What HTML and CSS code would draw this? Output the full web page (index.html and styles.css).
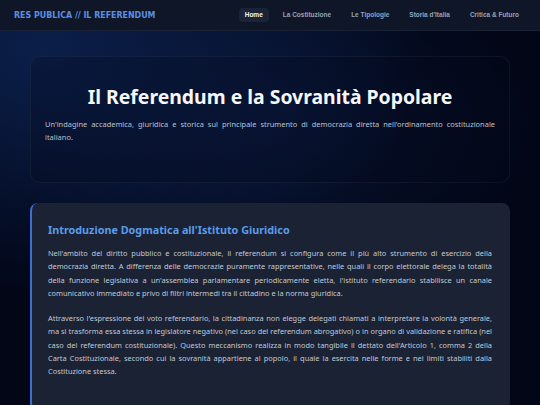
FILE: index.html
```html
<!DOCTYPE html>
<html lang="it">
<head>
<meta charset="utf-8">
<title>Res Publica // Il Referendum</title>
<link rel="stylesheet" href="styles.css">
</head>
<body>
<header class="topbar">
  <div class="brand">RES PUBLICA // IL REFERENDUM</div>
  <nav class="nav">
    <a class="nav-item active">Home</a>
    <a class="nav-item">La Costituzione</a>
    <a class="nav-item">Le Tipologie</a>
    <a class="nav-item">Storia d'Italia</a>
    <a class="nav-item">Critica &amp; Futuro</a>
  </nav>
</header>
<main class="main">
  <section class="hero">
    <h1 class="hero-title">Il Referendum e la Sovranità Popolare</h1>
    <p class="hero-sub">Un'indagine accademica, giuridica e storica sul principale strumento di democrazia diretta nell'ordinamento costituzionale italiano.</p>
  </section>
  <section class="card">
    <h2 class="card-title">Introduzione Dogmatica all'Istituto Giuridico</h2>
    <p class="card-text">Nell'ambito del diritto pubblico e costituzionale, il referendum si configura come il più alto strumento di esercizio della democrazia diretta. A differenza delle democrazie puramente rappresentative, nelle quali il corpo elettorale delega la totalità della funzione legislativa a un'assemblea parlamentare periodicamente eletta, l'istituto referendario stabilisce un canale comunicativo immediato e privo di filtri intermedi tra il cittadino e la norma giuridica.</p>
    <p class="card-text">Attraverso l'espressione del voto referendario, la cittadinanza non elegge delegati chiamati a interpretare la volontà generale, ma si trasforma essa stessa in legislatore negativo (nel caso del referendum abrogativo) o in organo di validazione e ratifica (nel caso del referendum costituzionale). Questo meccanismo realizza in modo tangibile il dettato dell'Articolo 1, comma 2 della Carta Costituzionale, secondo cui la sovranità appartiene al popolo, il quale la esercita nelle forme e nei limiti stabiliti dalla Costituzione stessa.</p>
  </section>
</main>
</body>
</html>
```

FILE: styles.css
```css
* { box-sizing: border-box; }
html, body { margin: 0; padding: 0; }
body {
  min-height: 405px;
  font-family: "Noto Sans", "Open Sans", sans-serif;
  color: #cbd5e1;
  background-color: #020617;
  background-image: radial-gradient(ellipse 70% 60% at 8% 12%, #0b1f4a 0%, rgba(2, 6, 23, 0) 100%),
                    radial-gradient(ellipse 50% 40% at 50% 30%, rgba(12, 30, 70, 0.6) 0%, rgba(2, 6, 23, 0) 100%);
  overflow: hidden;
}
.topbar {
  height: 31px;
  display: flex;
  align-items: center;
  justify-content: space-between;
  padding: 0 15px 0 14px;
  background: #0f1628;
  border-bottom: 1px solid #1a2336;
}
.brand {
  font-family: "DejaVu Sans Condensed", "DejaVu Sans", sans-serif;
  font-stretch: condensed;
  font-weight: bold;
  font-size: 8.8px;
  color: #5b8fe0;
  letter-spacing: 0;
}
.nav {
  display: flex;
  gap: 8px;
}
.nav-item {
  font-family: "Liberation Sans", Arial, sans-serif;
  font-weight: bold;
  font-size: 6.5px;
  color: #94a3b8;
  padding: 4px 6px;
  border-radius: 4px;
  line-height: 6px;
}
.nav-item.active {
  color: #f1f5f9;
  background: #1b2436;
}
.main {
  padding: 25px 30px 0 30px;
  display: flex;
  flex-direction: column;
  gap: 20px;
}
.hero {
  height: 127px;
  border: 1px solid rgba(148, 163, 184, 0.08);
  border-radius: 10px;
  padding: 26px 14px 0 14px;
  background: rgba(2, 6, 23, 0.25);
}
.hero-title {
  margin: 0;
  text-align: center;
  font-size: 19.4px;
  font-weight: bold;
  color: #f5f7fa;
  line-height: 28px;
}
.hero-sub {
  margin: 7px 0 0 0;
  font-size: 7.45px;
  line-height: 13px;
  text-align: justify;
  color: #b8c2d2;
}
.card {
  background: #1a2234;
  border-left: 2px solid #3b6fd4;
  border-radius: 8px;
  padding: 19px 18px 20px 16px;
}
.card-title {
  margin: 0 0 9px 0;
  font-size: 10.8px;
  font-weight: bold;
  color: #5b9be8;
  line-height: 16px;
}
.card-text {
  margin: 0 0 12px 0;
  font-size: 7.4px;
  line-height: 13.3px;
  text-align: justify;
  color: #c1c9d6;
}
```
